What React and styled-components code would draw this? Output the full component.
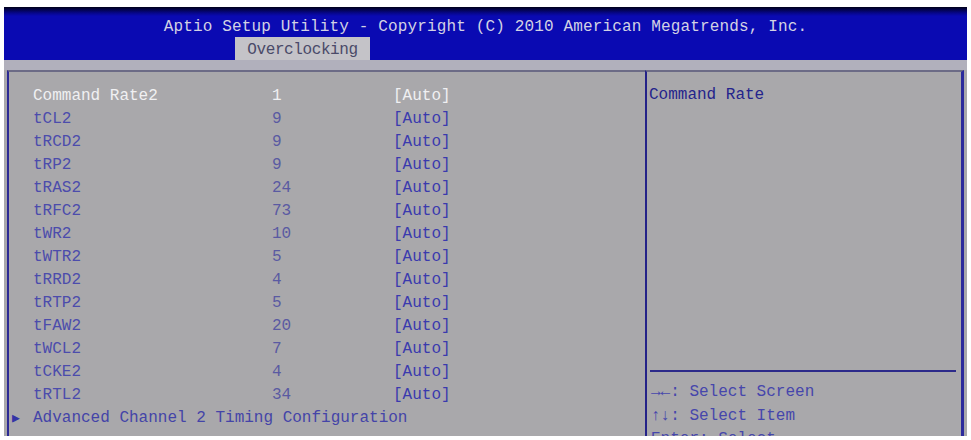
import React from "react";
import styled, { createGlobalStyle } from "styled-components";

const GlobalStyle = createGlobalStyle`
  body {
    margin: 0;
    background: #ffffff;
  }
`;

const Screen = styled.div`
  width: 963px;
  height: 429px;
  margin: 7px 0 0 4px;
  display: flex;
  flex-direction: column;
  background: #a9a8ab;
  font-family: "Liberation Mono", "DejaVu Sans Mono", monospace;
  font-size: 16px;
  overflow: hidden;
`;

const Header = styled.div`
  height: 53px;
  flex-shrink: 0;
  display: flex;
  flex-direction: column;
  background: linear-gradient(#00001a 0px, #06068a 6px, #0a0ab2 9px, #0a0ab2 100%);
`;

const Title = styled.div`
  padding-top: 10px;
  line-height: 20px;
  text-align: center;
  color: #d2d2e4;
  letter-spacing: 0.15px;
`;

const Tab = styled.div`
  align-self: flex-start;
  margin-left: 231px;
  width: 135px;
  height: 23px;
  box-sizing: border-box;
  padding-top: 3px;
  line-height: 20px;
  text-align: center;
  background: #c4c3c8;
  color: #4a4a68;
  letter-spacing: -0.4px;
`;

const Band = styled.div`
  height: 10px;
  flex-shrink: 0;
  background: #b1b0bc;
`;

const Body = styled.div`
  flex: 1;
  display: grid;
  grid-template-columns: 638px 1fr;
  padding: 0 3px;
  min-height: 0;
`;

const Panel = styled.div`
  border-top: 2px solid #6c6b86;
  border-left: ${(p) => p.$edge === "left" ? "2px solid #2c2a94" : "2px solid #242288"};
  border-right: ${(p) => p.$edge === "right" ? "3px solid #2c2a9c" : "none"};
  padding-top: 12px;
  overflow: hidden;
  min-height: 0;
`;

const Rows = styled.div`
  display: grid;
  grid-template-columns: 24px 239px 121px auto;
  grid-auto-rows: 23px;
  align-items: center;
`;

const Marker = styled.span`
  padding-left: 3px;
  color: #3434a6;
  font-size: 13px;
`;

const Cell = styled.span`
  white-space: pre;
  color: ${(p) => (p.$selected ? "#f0f0f2" : p.$tone)};
`;

const Link = styled.span`
  grid-column: 2 / 5;
  white-space: pre;
  color: #4444a8;
`;

const Help = styled.div`
  height: 286px;
  padding-left: 2px;
  line-height: 23px;
  color: #24248c;
`;

const Separator = styled.div`
  height: 2px;
  margin: 0 5px 0 3px;
  background: #2c2a8a;
`;

const Keys = styled.div`
  padding: 9px 0 0 4px;
  line-height: 23.5px;
  color: #4646ac;
  white-space: pre;
`;

const items = [
  ["Command Rate2", "1"],
  ["tCL2", "9"],
  ["tRCD2", "9"],
  ["tRP2", "9"],
  ["tRAS2", "24"],
  ["tRFC2", "73"],
  ["tWR2", "10"],
  ["tWTR2", "5"],
  ["tRRD2", "4"],
  ["tRTP2", "5"],
  ["tFAW2", "20"],
  ["tWCL2", "7"],
  ["tCKE2", "4"],
  ["tRTL2", "34"],
];

const App = () => {
  return (
    <>
      <GlobalStyle />
      <Screen>
        <Header>
          <Title>Aptio Setup Utility - Copyright (C) 2010 American Megatrends, Inc.</Title>
          <Tab>Overclocking</Tab>
        </Header>
        <Band />
        <Body>
          <Panel $edge="left">
            <Rows>
              {items.map(([name, value], i) => (
                <React.Fragment key={name}>
                  <span />
                  <Cell $selected={i === 0} $tone="#4c4cac">{name}</Cell>
                  <Cell $selected={i === 0} $tone="#5a5aa2">{value}</Cell>
                  <Cell $selected={i === 0} $tone="#3a3aae">[Auto]</Cell>
                </React.Fragment>
              ))}
              <Marker>▶</Marker>
              <Link>Advanced Channel 2 Timing Configuration</Link>
            </Rows>
          </Panel>
          <Panel $edge="right">
            <Help>Command Rate</Help>
            <Separator />
            <Keys>
              <div>→←: Select Screen</div>
              <div>↑↓: Select Item</div>
              <div>Enter: Select</div>
            </Keys>
          </Panel>
        </Body>
      </Screen>
    </>
  );
};

export default App;
